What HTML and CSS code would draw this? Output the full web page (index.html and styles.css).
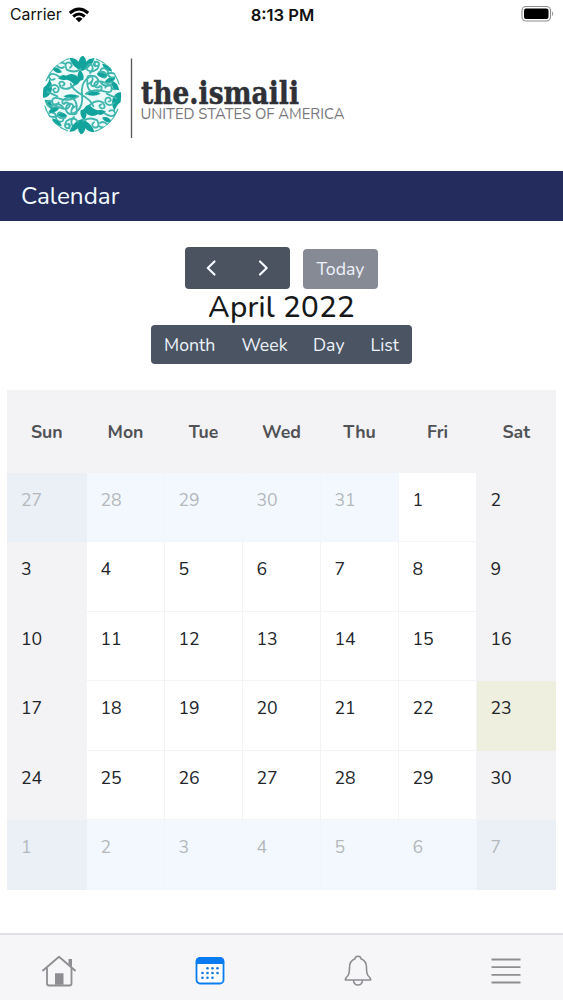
FILE: index.html
```
<!doctype html>
<html lang="en">
<head>
  <meta charset="utf-8">
  <title>Calendar</title>
  <link rel="stylesheet" href="styles.css">
</head>
<body>

	<div class="status">
		<div class="carrier">
			<span>Carrier</span>
			<svg width="22" height="16" viewBox="0 0 22 16">
				<g fill="none" stroke="#000" stroke-width="3">
					<path d="M1.8 6 Q11 -2 20.2 6"/>
					<path d="M5.2 9.5 Q11 4.6 16.8 9.5"/>
				</g>
				<path d="M7.5 11.7 Q11 9 14.5 11.7 L11 15.2z"/>
			</svg>
		</div>
		<div class="time">8:13 PM</div>
		<div class="battery">
			<svg width="34" height="17" viewBox="0 0 34 17">
				<rect x="1" y="1.5" width="28.5" height="14.5" rx="4" fill="none" stroke="#8c8c8c" stroke-width="1.1"/>
				<rect x="3" y="3.5" width="24.5" height="10.5" rx="2"/>
				<path d="M31.2 6.2 Q33.4 8.7 31.2 11.2z" fill="#8c8c8c"/>
			</svg>
		</div>
	</div>

	<div class="brand">
		<svg width="330" height="105" viewBox="0 0 330 105">
			<defs>
				<clipPath id="disc"><circle r="118"/></clipPath>
				<g id="half">
					<!-- leaves -->
					<g fill="#12a49c">
						<path d="M0 -72 Q-30 -84 -38 -112 Q-20 -112 -10 -100 Q-6 -118 4 -118 Q12 -110 12 -100 Q24 -112 38 -110 Q28 -80 0 -72z"/>
						<path d="M-48 -58 Q-22 -72 -4 -44 Q-10 -32 -22 -28 Q-30 -42 -46 -46 Q-62 -42 -72 -50 Q-60 -64 -48 -58z"/>
						<path d="M-8 -42 Q-20 -60 -6 -76 Q8 -62 4 -46z"/>
						<path d="M-118 -20 Q-102 -30 -98 -48 Q-84 -26 -94 -6 Q-104 10 -118 8z"/>
						<path d="M-112 14 Q-88 14 -88 42 Q-106 40 -112 14z"/>
						<path d="M-56 4 Q-34 -8 -8 4 Q-28 18 -56 4z"/>
						<path d="M-90 -80 Q-72 -88 -60 -68 Q-78 -60 -90 -80z"/>
						<path d="M60 -94 Q66 -74 90 -70 Q86 -92 60 -94z"/>
						<path d="M68 -40 Q84 -60 100 -50 Q92 -34 68 -40z"/>
						<path d="M-76 58 Q-54 46 -44 64 Q-58 74 -76 58z"/>
					</g>
					<!-- vines -->
					<g fill="none" stroke="#3fb6ae" stroke-width="5.5" stroke-linecap="round">
						<path d="M0 0 Q-30 -18 -34 -34 M0 0 Q-4 -32 14 -48 Q38 -68 48 -46 Q50 -28 34 -26 Q22 -30 30 -40"/>
						<path d="M-4 -78 Q-22 -64 -46 -76 Q-56 -98 -38 -98 Q-24 -90 -36 -82"/>
						<path d="M-52 -94 Q-72 -102 -76 -88 Q-64 -76 -54 -84"/>
						<path d="M-66 -54 Q-92 -72 -100 -56 Q-96 -40 -82 -48"/>
						<path d="M-24 -30 Q-42 -12 -62 -22 Q-76 -42 -58 -40 Q-46 -32 -58 -28"/>
						<path d="M-96 -24 Q-80 -38 -70 -22 Q-68 -6 -82 -8 Q-92 -18 -80 -20"/>
						<path d="M-12 4 Q-38 22 -70 10 Q-94 4 -88 26 Q-74 36 -70 22"/>
						<path d="M-92 40 Q-76 32 -60 40 Q-38 46 -36 28 Q-46 18 -54 26"/>
						<path d="M-98 54 Q-84 48 -78 62 Q-80 76 -68 80 Q-54 82 -56 70"/>
						<path d="M12 -80 Q24 -62 46 -78 Q58 -98 42 -100 Q30 -92 40 -86"/>
						<path d="M50 -68 Q68 -74 74 -60 Q72 -48 60 -54 M72 -62 Q86 -70 102 -62"/>
						<path d="M56 -38 Q70 -20 90 -32 Q104 -38 106 -22 Q98 -14 90 -20"/>
						<path d="M16 -44 Q14 -20 26 -12 Q44 -2 58 -16 Q62 -28 52 -26"/>
						<path d="M-20 34 Q-40 46 -28 58 Q-14 60 -16 48 M-24 66 Q-38 78 -28 92 Q-16 94 -16 82"/>
						<path d="M-48 88 Q-36 84 -38 100 M-104 -10 L-74 4 M66 -100 L54 -108"/>
						<path d="M-108 -44 Q-96 -74 -76 -90 M-60 -100 Q-50 -108 -40 -109 M44 -108 Q70 -98 88 -78 M98 -64 Q108 -48 112 -34"/>
					</g>
				</g>
			</defs>
			<g transform="translate(52 50) scale(.3333)">
				<circle r="114" fill="#edfaf9"/>
				<g clip-path="url(#disc)">
					<use href="#half"/>
					<use href="#half" transform="rotate(180)"/>
				</g>
			</g>
			<path d="M101.5 13.500V93" stroke="#55555a" stroke-width="1.3"/>
			<text class="brand-name" x="111" y="59" textLength="158" lengthAdjust="spacingAndGlyphs">the.ismaili</text>
			<text class="brand-country" x="110.500" y="74" textLength="204" lengthAdjust="spacingAndGlyphs">UNITED STATES OF AMERICA</text>
		</svg>
	</div>

	<h1 class="page-title">Calendar</h1>

	<div class="toolbar">
		<div class="nav">
			<div class="arrows">
				<svg width="12" height="18" viewBox="0 0 12 18"><path d="M9.500 2.500 L2.800 9 L9.500 15.500"/></svg>
				<svg width="12" height="18" viewBox="0 0 12 18"><path d="M2 2.500 L8.700 9 L2 15.500"/></svg>
			</div>
			<div class="today-btn">Today</div>
		</div>
		<h2>April 2022</h2>
		<div class="views">
			<span class="month">Month</span>
			<span class="week">Week</span>
			<span class="day">Day</span>
			<span class="list">List</span>
		</div>
	</div>

	<div class="calendar">
		<div class="head">Sun</div>
		<div class="head">Mon</div>
		<div class="head">Tue</div>
		<div class="head">Wed</div>
		<div class="head">Thu</div>
		<div class="head">Fri</div>
		<div class="head">Sat</div>

		<div class="cell weekend other">27</div>
		<div class="cell other">28</div>
		<div class="cell other">29</div>
		<div class="cell other">30</div>
		<div class="cell other">31</div>
		<div class="cell">1</div>
		<div class="cell weekend">2</div>

		<div class="cell weekend">3</div>
		<div class="cell">4</div>
		<div class="cell">5</div>
		<div class="cell">6</div>
		<div class="cell">7</div>
		<div class="cell">8</div>
		<div class="cell weekend">9</div>

		<div class="cell weekend">10</div>
		<div class="cell">11</div>
		<div class="cell">12</div>
		<div class="cell">13</div>
		<div class="cell">14</div>
		<div class="cell">15</div>
		<div class="cell weekend">16</div>

		<div class="cell weekend">17</div>
		<div class="cell">18</div>
		<div class="cell">19</div>
		<div class="cell">20</div>
		<div class="cell">21</div>
		<div class="cell">22</div>
		<div class="cell weekend today">23</div>

		<div class="cell weekend">24</div>
		<div class="cell">25</div>
		<div class="cell">26</div>
		<div class="cell">27</div>
		<div class="cell">28</div>
		<div class="cell">29</div>
		<div class="cell weekend">30</div>

		<div class="cell weekend other">1</div>
		<div class="cell other">2</div>
		<div class="cell other">3</div>
		<div class="cell other">4</div>
		<div class="cell other">5</div>
		<div class="cell other">6</div>
		<div class="cell weekend other">7</div>
	</div>

	<div class="tabs">
		<svg width="34" height="32" viewBox="0 0 34 32">
			<g fill="none" stroke="#8e8e92" stroke-width="1.8" stroke-linecap="round" stroke-linejoin="round">
				<path d="M1 15.500 L17 1.700 L33 15.500"/>
				<path d="M5 13.500 V28.500 Q5 30.500 7 30.500 H27.500 Q29.500 30.500 29.500 28.500 V13.500"/>
			</g>
			<path d="M13 18.200h8.500v11.500h-8.500z M26.500 4h3.500v8l-3.500 -3z" fill="#8e8e92"/>
		</svg>
		<svg width="30" height="32" viewBox="0 0 30 32">
			<rect x="1.500" y="3" width="27" height="25.500" rx="3.500" fill="#fff" stroke="#0a7cf0" stroke-width="1.800"/>
			<path d="M.800 9 V6 Q.800 2.500 4.700 2.500 H25.300 Q29.200 2.500 29.200 6 V9z" fill="#0a7cf0"/>
			<g fill="#1578e0">
				<circle cx="12.500" cy="13.200" r="1.300"/><circle cx="17.500" cy="13.200" r="1.300"/><circle cx="22.500" cy="13.200" r="1.300"/>
				<circle cx="7.500" cy="18" r="1.300"/><circle cx="12.500" cy="18" r="1.300"/><circle cx="17.500" cy="18" r="1.300"/><circle cx="22.500" cy="18" r="1.300"/>
				<circle cx="7.500" cy="22.800" r="1.300"/><circle cx="12.500" cy="22.800" r="1.300"/><circle cx="17.500" cy="22.800" r="1.300"/>
			</g>
		</svg>
		<svg width="28" height="32" viewBox="0 0 28 32">
			<g fill="none" stroke="#8e8e92" stroke-width="1.600" stroke-linejoin="round">
				<path d="M14 1.200 Q11.200 1.200 11 3.800 Q5.500 6 5.500 12.500 Q5.500 18.500 4 20.500 Q1.300 23 1.300 25 H26.700 Q26.700 23 24 20.500 Q22.500 18.500 22.500 12.500 Q22.500 6 17 3.800 Q16.800 1.200 14 1.200z"/>
				<path d="M9.500 25 Q9.800 30 14 30 Q18.200 30 18.500 25"/>
			</g>
		</svg>
		<svg width="30" height="32" viewBox="0 0 30 32">
			<path d="M.5 4.500h29 M.5 12.200h29 M.5 19.800h29 M.5 27.500h29" stroke="#8e8e92" stroke-width="1.800"/>
		</svg>
	</div>

</body>
</html>
```

FILE: styles.css
```
html, body {height: 100%}
body {
	margin: 0;
	display: flex;
	flex-direction: column;
	overflow: hidden;
	background: #fff;
	color: #212529;
	font-family: Nunito, Lato, "Open Sans", sans-serif;
	font-size: 17.7px;
}
svg {
	display: block;
	flex: none;
}

.status {
	display: grid;
	grid-template-columns: 1fr 1fr 1fr;
	height: 29px;
	align-items: center;
	padding: 0 8px 0 10px;
	color: #111;
	font-family: Inter, sans-serif;
	font-size: 15.8px;
}
.carrier {
	display: flex;
	align-items: center;
	gap: 6px;
}
.time {
	text-align: center;
	font-size: 16.6px;
	font-weight: 600;
}
.battery {
	display: flex;
	justify-content: flex-end;
	height: 20px;
}

.brand {
	height: 126px;
	padding: 16px 0 0 30px;
}
.brand-name {
	fill: #303136;
	stroke: #303136;
	stroke-width: .5px;
	font: bold 31px "DejaVu Serif", serif;
}
.brand-country {
	fill: #77777c;
	font: 400 16px Nunito, "Open Sans", sans-serif;
}

.page-title {
	height: 50px;
	margin: 0;
	padding-left: 21px;
	background: #232c5c;
	color: #f4fbff;
	font-size: 24.3px;
	font-weight: 400;
	line-height: 50px;
}

.toolbar {
	display: flex;
	flex-direction: column;
	align-items: center;
	height: 169px;
	padding-top: 26px;
	box-sizing: border-box;
}
.nav {
	display: flex;
	align-items: flex-end;
	gap: 13px;
}
.arrows {
	display: flex;
	justify-content: space-around;
	align-items: center;
	width: 105px;
	height: 42px;
	border-radius: 4px;
	background: #4b5361;
}
.arrows path {
	fill: none;
	stroke: #f6f9ff;
	stroke-width: 2.2;
	stroke-linecap: round;
	stroke-linejoin: round;
}
.today-btn {
	width: 75px;
	height: 40px;
	border-radius: 4px;
	background: #868a94;
	color: #eef2fa;
	line-height: 40px;
	text-align: center;
}
.toolbar h2 {
	margin: 0;
	color: #17181a;
	font-size: 29.5px;
	font-weight: 500;
	line-height: 36px;
	letter-spacing: .3px;
}
.views {
	display: flex;
	height: 39px;
	border-radius: 4px;
	background: #4a5462;
	color: #eef3fb;
	line-height: 40px;
	text-align: center;
}
.month {width: 78px}
.week {width: 71.5px}
.day {width: 57px}
.list {width: 55px}

.calendar {
	display: grid;
	grid-template-columns: 79.5px repeat(5, 78px) 79.5px;
	grid-template-rows: 82.5px repeat(6, 69.6px);
	margin: 0 7px;
}
.head {
	background: #f3f2f4;
	color: #505256;
	font-weight: 700;
	line-height: 84px;
	text-align: center;
}
.cell {
	padding: 16px 0 0 14px;
	border-right: 1px solid #f2f3f5;
	border-bottom: 1.5px solid #f3f4f6;
	box-sizing: border-box;
	line-height: 22px;
}
.weekend {
	background: #f3f2f4;
	border-color: #f3f2f4;
}
.other {
	background: #f3f8fe;
	border-color: #f1f6fc;
	color: #b4b8bd;
}
.weekend.other {
	background: #eaf0f6;
	border-color: #eaeff5;
}
.today {
	background: #efefe0;
	border-color: #efefe0;
}

.tabs {
	display: flex;
	justify-content: space-between;
	height: 67px;
	margin-top: auto;
	padding: 19.5px 42px 0;
	border-top: 2px solid #e1e1e5;
	box-sizing: border-box;
	background: #f6f6f8;
}
```
